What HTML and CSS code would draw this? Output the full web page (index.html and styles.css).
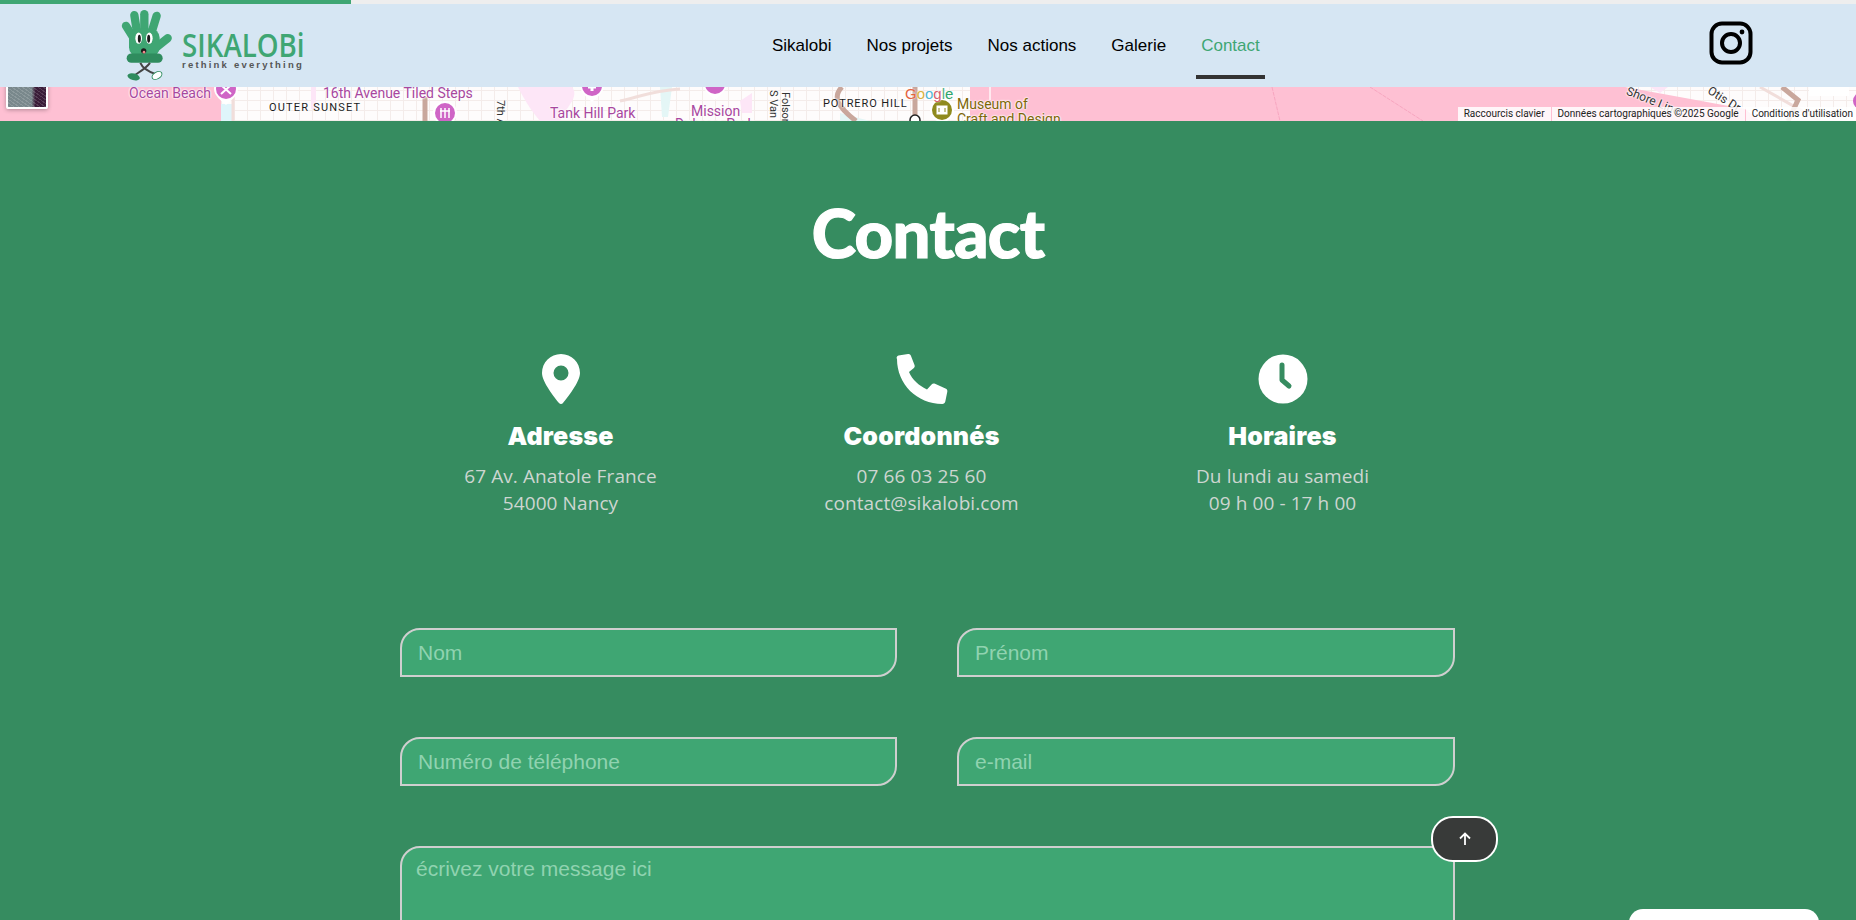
FILE: index.html
```html
<!DOCTYPE html>
<html lang="fr">
<head>
    <meta charset="UTF-8">
    <title>Contact - Sikalobi</title>
    <link rel="stylesheet" href="styles.css">
</head>
<body>
    <div class="progress"><div class="progress-fill"></div></div>

    <header class="topbar">
        <a class="logo" href="#">
            <svg class="logo-hand" viewBox="0 0 153 212" width="51" height="71">
                <g stroke="#3fa673" stroke-width="25" stroke-linecap="round">
                    <path d="M38 84 L15 47"/>
                    <path d="M49 72 L40 15"/>
                    <path d="M70 67 V12"/>
                    <path d="M90 72 L107 17"/>
                    <path d="M108 110 L140 84"/>
                </g>
                <rect x="24" y="55" width="92" height="85" rx="28" fill="#3fa673"/>
                <rect x="17" y="130" width="108" height="28" rx="14" fill="#2f8c5e"/>
                <ellipse cx="53" cy="84" rx="10" ry="17" fill="#fff"/>
                <ellipse cx="85" cy="84" rx="10" ry="17" fill="#fff"/>
                <ellipse cx="55" cy="86" rx="4.500" ry="12" fill="#1c1c1c"/>
                <ellipse cx="83" cy="86" rx="4.500" ry="12" fill="#1c1c1c"/>
                <ellipse cx="68" cy="122" rx="8" ry="8" fill="#1c1c1c"/>
                <ellipse cx="69" cy="126" rx="4" ry="4" fill="#f08a8a"/>
                <path d="M87 158 C75 175 55 185 38 197 M58 158 C65 175 85 185 104 192" fill="none" stroke="#444" stroke-width="6"/>
                <ellipse cx="38" cy="200" rx="19" ry="10" fill="#2f8c5e" transform="rotate(15 38 200)"/>
                <ellipse cx="108" cy="196" rx="16" ry="10" fill="#fff" stroke="#2f8c5e" stroke-width="3" transform="rotate(-30 108 196)"/>
            </svg>
            <span class="logo-text">
                <span class="logo-name">SIKALOBi</span>
                <span class="logo-tag">rethink everything</span>
            </span>
        </a>

        <nav class="nav">
            <a href="#">Sikalobi</a>
            <a href="#">Nos projets</a>
            <a href="#">Nos actions</a>
            <a href="#">Galerie</a>
            <a href="#" class="active">Contact</a>
        </nav>

        <a class="insta" href="#">
            <svg viewBox="0 0 44 44" width="44" height="44" fill="none" stroke="#000" stroke-width="4">
                <rect x="2.500" y="2.500" width="39" height="39" rx="10.500"/>
                <circle cx="22" cy="22" r="9"/>
                <circle cx="33" cy="11" r="2.400" fill="#000" stroke="none"/>
            </svg>
        </a>
    </header>

    <div class="map">
        <svg class="map-art" viewBox="0 0 1856 34" width="1856" height="34" fill="none">
            <defs>
                <path id="pin-shape" d="M-12 0 A12 12 0 1 1 12 0 C12 7 4 12 0 16 C-4 12 -12 7 -12 0 Z" fill="#fff"/>
            </defs>

            <!-- water and parks -->
            <path d="M221 17 H233 V34 H221 Z" fill="#dff5fb"/>
            <path d="M0 0 H221 V34 H0 Z" fill="#fec0d3"/>
            <path d="M970 0 H1625 L1745 22 L1760 34 H970 Z" fill="#fec0d3"/>
            <path d="M518 0 H572 C580 10 566 20 560 34 H540 C530 22 524 12 518 0 Z" fill="#fde6f7"/>
            <path d="M311 0 H316 V22 H311 Z M740 14 L752 6 V26 H742 Z M1650 0 H1668 L1660 6 Z" fill="#fde6f7"/>
            <path d="M660 0 H672 L668 30 H662 Z M840 26 L870 34 H840 Z" fill="#e4f6f6"/>

            <!-- roads -->
            <path d="M233 0 V34 M620 14 C640 10 650 4 680 2 M1760 0 L1820 34" stroke="#f1dedb" stroke-width="3"/>
            <path d="M425 10 V34 M915 0 V30 M1782 0 L1798 13 L1788 34" stroke="#c9a79c" stroke-width="5"/>
            <path d="M842 0 C832 10 838 20 856 34" stroke="#c9a79c" stroke-width="5"/>
            <path d="M1272 0 L1280 34 M1370 0 L1423 34" stroke="#f7a6c0" stroke-width="1" stroke-dasharray="4 1"/>
            <path d="M990 0 V13" stroke="#ffe9ef" stroke-width="2"/>
            <path d="M1809 0 H1849 V9 H1809 Z" fill="#fff"/>

            <!-- pins -->
            <g transform="translate(226 2)">
                <use href="#pin-shape"/>
                <circle r="10" fill="#cf65c6"/>
                <path d="M-5 -4 L5 5 M5 -4 L-5 5" stroke="#fff" stroke-width="2"/>
            </g>
            <g transform="translate(592 -1)">
                <use href="#pin-shape"/>
                <circle r="10" fill="#cf65c6"/>
                <path d="M-4 1 H4 M0 -3 V5" stroke="#fff" stroke-width="3"/>
            </g>
            <g transform="translate(715 -3)">
                <use href="#pin-shape"/>
                <circle r="10" fill="#cf65c6"/>
            </g>
            <circle cx="445" cy="26" r="12" fill="#fff"/>
            <circle cx="445" cy="26" r="10" fill="#cf65c6"/>
            <path d="M441 21 V31 M445 21 V31 M449 21 V31 M440 24 H450" stroke="#fff" stroke-width="1.500"/>
            <circle cx="942" cy="23" r="12" fill="#fff"/>
            <circle cx="942" cy="23" r="10" fill="#8f8a1e"/>
            <path d="M936 18 H948 V28 H936 Z M939 21 V25 M945 21 V25" fill="#fff" stroke="#8f8a1e" stroke-width="1"/>
            <circle cx="915" cy="33" r="5" fill="#fff" stroke="#222" stroke-width="1.500"/>
            <circle cx="1862" cy="14" r="9" fill="#cf65c6"/>
        </svg>

        <div class="thumb"></div>

        <span class="label poi ocean">Ocean Beach</span>
        <span class="label poi steps">16th Avenue Tiled Steps</span>
        <span class="label dark sunset">OUTER SUNSET</span>
        <span class="label street seventh">7th Ave</span>
        <span class="label poi tank">Tank Hill Park</span>
        <span class="label poi mission">Mission</span>
        <span class="label poi dolores">Dolores Park</span>
        <span class="label street van">S Van</span>
        <span class="label street folsom">Folsom St</span>
        <span class="label dark potrero">POTRERO HILL</span>
        <span class="google"><b class="g-r">G</b><b class="g-y">o</b><b class="g-b">o</b><b class="g-p">g</b><b class="g-t">l</b><b class="g-g">e</b></span>
        <span class="label museum">Museum of<br>Craft and Design</span>
        <span class="label street shore">Shore Line</span>
        <span class="label street otis">Otis Dr</span>

        <div class="map-links">
            <span>Raccourcis clavier</span>
            <span>Données cartographiques ©2025 Google</span>
            <span>Conditions d'utilisation</span>
        </div>
    </div>

    <main class="contact">
        <h1>Contact</h1>

        <section class="infos">
            <div class="info">
                <svg viewBox="0 0 38 50" width="38" height="50">
                    <path fill="#fff" fill-rule="evenodd" d="M19 0 C8.500 0 0 8.500 0 19 C0 28 13 44 17 49 C18 50.300 20 50.300 21 49 C25 44 38 28 38 19 C38 8.500 29.500 0 19 0 Z M19 11.500 A7.500 7.500 0 1 1 19 26.500 A7.500 7.500 0 1 1 19 11.500 Z"/>
                </svg>
                <h3>Adresse</h3>
                <p>67 Av. Anatole France<br>54000 Nancy</p>
            </div>
            <div class="info">
                <svg viewBox="0 0 52 50" width="52" height="50">
                    <path fill="#fff" d="M1 5 C0 3.500 1 2 2.500 1.500 L12 0 C13.500 0 14.500 .6 15 2 L18.500 11 C19 12.300 18.700 13.400 17.600 14.300 L13 18 C16 25.500 23.500 32 31 35.500 L35.600 30.500 C36.500 29.500 37.700 29.300 39 29.800 L49.500 34.500 C51 35.200 51.600 36.300 51.300 37.800 L49.300 47.500 C49 49 47.800 50 46.300 50 C21 50 1 30 1 5 Z"/>
                </svg>
                <h3>Coordonnés</h3>
                <p>07 66 03 25 60<br>contact@sikalobi.com</p>
            </div>
            <div class="info">
                <svg viewBox="0 0 50 50" width="50" height="50">
                    <circle cx="25" cy="25" r="24.500" fill="#fff"/>
                    <path d="M24 11 V26 L31 32" fill="none" stroke="#368c60" stroke-width="5" stroke-linecap="round" stroke-linejoin="round"/>
                </svg>
                <h3>Horaires</h3>
                <p>Du lundi au samedi<br>09 h 00 - 17 h 00</p>
            </div>
        </section>

        <form class="form">
            <input type="text" placeholder="Nom">
            <input type="text" placeholder="Prénom">
            <input type="tel" placeholder="Numéro de téléphone">
            <input type="email" placeholder="e-mail">
            <textarea placeholder="écrivez votre message ici"></textarea>
        </form>
    </main>

    <a class="to-top" href="#">
        <svg viewBox="0 0 14 14" width="14" height="14" fill="none" stroke="#fff" stroke-width="1.800">
            <path d="M7 13 V2 M2 6.500 L7 1.500 L12 6.500"/>
        </svg>
    </a>
    <div class="chat"></div>
</body>
</html>
```

FILE: styles.css
```css
* {
    box-sizing: border-box;
}

body {
    margin: 0;
    height: 100vh;
    overflow: hidden;
    font-family: "Liberation Sans", Arial, sans-serif;
    background: #368c60;
}

.progress {
    height: 4px;
    background: #eeeeee;
}

.progress-fill {
    width: 351px;
    height: 100%;
    background: #3fa673;
}

.topbar {
    height: 83px;
    display: flex;
    align-items: center;
    padding: 0 103px 0 121px;
    background: #d6e6f3;
}

.logo {
    display: flex;
    align-items: center;
    gap: 10px;
    width: 651px;
    text-decoration: none;
}

.logo-text {
    display: flex;
    flex-direction: column;
    margin-top: 9px;
}

.logo-name {
    width: 122px;
    font-family: "Open Sans", sans-serif;
    font-weight: 600;
    font-size: 33px;
    line-height: 30px;
    color: #3fa673;
    white-space: nowrap;
    transform: scaleX(.84);
    transform-origin: left;
}

.logo-tag {
    font-weight: 700;
    font-size: 9.500px;
    line-height: 10px;
    letter-spacing: 2.200px;
    color: #555;
    white-space: nowrap;
}

.nav {
    display: flex;
    gap: 35px;
    align-self: stretch;
    align-items: center;
    font-size: 17px;
}

.nav a {
    position: relative;
    color: #000;
    text-decoration: none;
}

.nav a.active {
    color: #3fa673;
}

.nav a.active::after {
    content: "";
    position: absolute;
    left: -5px;
    right: -5px;
    bottom: -23px;
    height: 4px;
    background: #333;
}

.insta {
    display: flex;
    margin-left: auto;
    margin-bottom: 6px;
}

.map {
    position: relative;
    height: 34px;
    overflow: hidden;
    background-color: #fefcfc;
    background-image:
        repeating-linear-gradient(90deg, #f4ecea 0 1px, transparent 1px 13px),
        repeating-linear-gradient(0deg, #f4ecea 0 1px, transparent 1px 10px);
}

.map-art {
    position: absolute;
    top: 0;
    left: 0;
}

.thumb {
    position: absolute;
    left: 6px;
    top: -20px;
    width: 42px;
    height: 42px;
    border: 2px solid #fff;
    border-radius: 2px;
    background:
        repeating-linear-gradient(35deg, rgba(255, 255, 255, .15) 0 1px, transparent 1px 3px),
        linear-gradient(90deg, #79888c 0 62%, #3a1c38 72%);
    box-shadow: 0 1px 4px rgba(0, 0, 0, .3);
}

.label {
    position: absolute;
    font-family: Roboto, sans-serif;
    white-space: nowrap;
    text-shadow: 0 0 2px #fff, 0 0 2px #fff, 0 0 2px #fff;
}

.poi {
    font-size: 14px;
    color: #a8479e;
}

.dark {
    font-size: 11px;
    letter-spacing: 1.200px;
    color: #1c1c1c;
}

.street {
    font-size: 11px;
    color: #333;
}

.ocean { left: 129px; top: -2px; }
.steps { left: 323px; top: -2px; }
.sunset { left: 269px; top: 14px; }
.seventh { left: 494px; top: 13px; writing-mode: vertical-rl; }
.tank { left: 550px; top: 18px; }
.mission { left: 691px; top: 16px; }
.dolores { left: 675px; top: 29px; }
.van { left: 767px; top: 3px; writing-mode: vertical-rl; }
.folsom { left: 779px; top: 5px; writing-mode: vertical-rl; }
.shore { left: 1625px; top: 7px; font-size: 12px; transform: rotate(22deg); }
.otis { left: 1706px; top: 5px; font-size: 12px; transform: rotate(32deg); }

.potrero {
    left: 823px;
    top: 10px;
    letter-spacing: .9px;
}

.museum {
    left: 957px;
    top: 10px;
    font-size: 14px;
    line-height: 15px;
    color: #7d6608;
}

.google {
    position: absolute;
    left: 905px;
    top: 0;
    font-size: 15px;
    line-height: 14px;
    text-shadow: 0 0 2px #fff;
}

.google b {
    font-weight: 400;
}

.g-r { color: #e4633d; }
.g-y { color: #d9b23e; }
.g-b { color: #4db8d6; }
.g-p { color: #d85f6e; }
.g-t { color: #4db28a; }
.g-g { color: #2ea56b; }

.map-links {
    position: absolute;
    right: 0;
    bottom: 0;
    display: flex;
    gap: 1px;
    height: 14px;
    font-family: Roboto, sans-serif;
    font-size: 10px;
    line-height: 14px;
    color: #222;
}

.map-links span {
    padding: 0 6px;
    background: rgba(255, 255, 255, .85);
}

.map-links span:last-child {
    padding-right: 3px;
}

.contact {
    height: 799px;
    padding-top: 71px;
    color: #fff;
}

h1 {
    margin: 0;
    text-align: center;
    font-family: Lato, sans-serif;
    font-weight: 900;
    font-size: 67px;
    line-height: 80px;
    letter-spacing: -.6px;
    -webkit-text-stroke: 1.200px #fff;
}

.infos {
    display: flex;
    justify-content: center;
    padding-right: 13px;
    margin-top: 82px;
}

.info {
    width: 361px;
    height: 177px;
    text-align: center;
}

.info svg {
    display: block;
    margin: 0 auto;
}

.info h3 {
    margin: 17px 0 12px;
    font-family: Inter, sans-serif;
    font-weight: 900;
    font-size: 25px;
    line-height: 30px;
    letter-spacing: .2px;
}

.info p {
    margin: 0;
    font-family: "Open Sans", sans-serif;
    font-size: 19px;
    line-height: 27px;
    letter-spacing: .1px;
    color: #cdd6d1;
}

.form {
    display: grid;
    grid-template-columns: 497px 498px;
    gap: 60px;
    justify-content: center;
    padding-right: 1px;
    margin-top: 97px;
}

.form input,
.form textarea {
    width: 100%;
    height: 49px;
    padding: 0 16px;
    border: 2px solid #cfcfcf;
    border-radius: 20px 0 20px 0;
    background: #3fa673;
    font-family: "Liberation Sans", sans-serif;
    font-size: 21px;
    color: #fff;
    outline: none;
}

.form textarea {
    grid-column: 1 / 3;
    height: 200px;
    padding: 9px 14px;
    resize: none;
}

::placeholder {
    color: #90d3b0;
    opacity: 1;
}

.to-top {
    position: fixed;
    left: 1431px;
    top: 816px;
    width: 67px;
    height: 46px;
    display: flex;
    align-items: center;
    justify-content: center;
    border: 2px solid #fff;
    border-radius: 22px;
    background: #383a39;
}

.chat {
    position: fixed;
    left: 1629px;
    top: 909px;
    width: 190px;
    height: 40px;
    border-radius: 14px;
    background: #fff;
}
```
